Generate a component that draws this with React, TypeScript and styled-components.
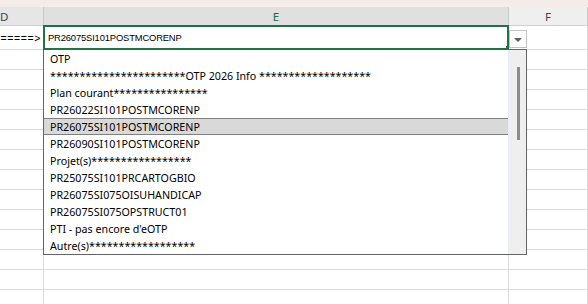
import React from "react";
import styled, { createGlobalStyle } from "styled-components";

const GlobalStyle = createGlobalStyle`
  body {
    margin: 0;
    background: #fff;
    overflow: hidden;
  }
`;

const stars = (n: number) => "*".repeat(n);

const items = [
  "OTP",
  `${stars(23)}OTP 2026 Info ${stars(19)}`,
  `Plan courant${stars(16)}`,
  "PR26022SI101POSTMCORENP",
  "PR26075SI101POSTMCORENP",
  "PR26090SI101POSTMCORENP",
  `Projet(s)${stars(17)}`,
  "PR25075SI101PRCARTOGBIO",
  "PR26075SI075OISUHANDICAP",
  "PR26075SI075OPSTRUCT01",
  "PTI - pas encore d'eOTP",
  `Autre(s)${stars(18)}`,
];

const SELECTED = 4;
const EMPTY_ROWS = 13;

const Sheet = styled.div`
  position: relative;
  width: 588px;
  height: 304px;
  overflow: hidden;
  background: #fff;
  font-family: "Liberation Sans", Arial, sans-serif;
`;

const TopBand = styled.div`
  height: 7px;
  background: #f3ece9;
`;

const Row = styled.div<{ $h: number }>`
  display: grid;
  grid-template-columns: 44px 465px 1fr;
  height: ${(p) => p.$h}px;
`;

const Cell = styled.div`
  box-sizing: border-box;
  border-right: 1px solid #dadada;
  border-bottom: 1px solid #dadada;
  display: flex;
  align-items: center;
  overflow: hidden;
  white-space: nowrap;
`;

const HeaderCell = styled(Cell)<{ $bg: string; $active?: boolean; $align?: string }>`
  background: ${(p) => p.$bg};
  border-right-color: #c9c9c9;
  border-bottom-color: ${(p) => (p.$active ? "#217346" : "#d0d0d0")};
  justify-content: ${(p) => p.$align ?? "center"};
  font-family: "Noto Sans", "Open Sans", sans-serif;
  font-size: 11.5px;
  color: ${(p) => (p.$active ? "#1e6b41" : "#444")};
`;

const ValueCell = styled(Cell)<{ $right?: boolean }>`
  justify-content: ${(p) => (p.$right ? "flex-end" : "flex-start")};
  padding: ${(p) => (p.$right ? "0 2px 0 0" : "0 0 0 4px")};
  font-size: ${(p) => (p.$right ? "10.5px" : "9.4px")};
  letter-spacing: ${(p) => (p.$right ? "0.6px" : "-0.15px")};
  color: #000;
`;

const ActiveFrame = styled.div`
  position: absolute;
  left: 43px;
  top: 25px;
  width: 466px;
  height: 25px;
  box-sizing: border-box;
  border: 2px solid #217346;
  z-index: 3;
`;

const FillHandle = styled.div`
  position: absolute;
  left: 506px;
  top: 46px;
  width: 3px;
  height: 3px;
  background: #217346;
  z-index: 4;
`;

const DropButton = styled.div`
  position: absolute;
  left: 509px;
  top: 30px;
  width: 18px;
  height: 18px;
  box-sizing: border-box;
  border: 1px solid #c3c3c3;
  background: #fdfdfd;
  display: flex;
  align-items: center;
  justify-content: center;

  &::after {
    content: "";
    border-left: 4px solid transparent;
    border-right: 4px solid transparent;
    border-top: 4px solid #5c5c5c;
    margin-top: 1px;
  }
`;

const ListBox = styled.div`
  position: absolute;
  left: 43px;
  top: 49px;
  width: 484px;
  height: 206px;
  box-sizing: border-box;
  border: 1px solid #646464;
  background: #fff;
  display: flex;
  z-index: 2;
`;

const Items = styled.div`
  flex: 1;
  display: flex;
  flex-direction: column;
  overflow: hidden;
`;

const Item = styled.div<{ $selected?: boolean }>`
  height: 17px;
  flex: none;
  box-sizing: border-box;
  display: flex;
  align-items: center;
  padding-left: 6px;
  margin: ${(p) => (p.$selected ? "0 -1px 0 -1px" : "0")};
  background: ${(p) => (p.$selected ? "#d9d9d9" : "transparent")};
  border: ${(p) => (p.$selected ? "1px solid #7f7f7f" : "none")};
  font-family: "Noto Sans", "Open Sans", sans-serif;
  font-size: 10.7px;
  color: #000;
  white-space: nowrap;
`;

const ScrollTrack = styled.div`
  width: 18px;
  flex: none;
  box-sizing: border-box;
  border-left: 1px solid #e4ecf8;
  background: #efefef;
  padding: 17px 0 0 8px;
`;

const Thumb = styled.div`
  width: 3px;
  height: 73px;
  background: #8c8c8c;
`;

export default function App() {
  return (
    <>
      <GlobalStyle />
      <Sheet>
        <TopBand />
        <Row $h={19}>
          <HeaderCell $bg="#e6e6e6" $align="flex-start">
            D
          </HeaderCell>
          <HeaderCell $bg="#e0e0e0" $active>
            E
          </HeaderCell>
          <HeaderCell $bg="#efefef">F</HeaderCell>
        </Row>
        <Row $h={24}>
          <ValueCell $right>========&gt;</ValueCell>
          <ValueCell>PR26075SI101POSTMCORENP</ValueCell>
          <Cell />
        </Row>
        {Array.from({ length: EMPTY_ROWS }, (_, i) => (
          <Row $h={20} key={i}>
            <Cell />
            <Cell />
            <Cell />
          </Row>
        ))}
        <ActiveFrame />
        <FillHandle />
        <DropButton />
        <ListBox>
          <Items>
            {items.map((label, i) => (
              <Item key={i} $selected={i === SELECTED}>
                {label}
              </Item>
            ))}
          </Items>
          <ScrollTrack>
            <Thumb />
          </ScrollTrack>
        </ListBox>
      </Sheet>
    </>
  );
}
